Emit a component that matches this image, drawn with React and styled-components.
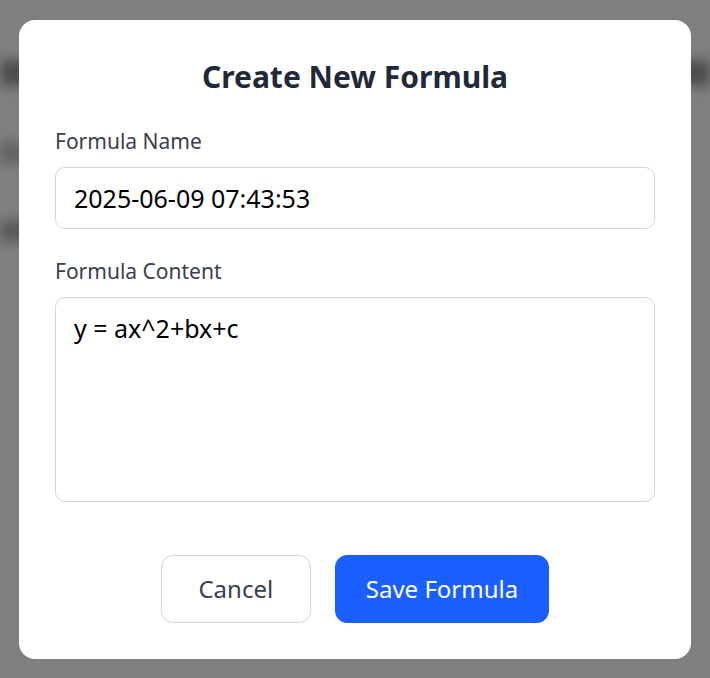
import React, { useState } from "react";
import styled, { createGlobalStyle } from "styled-components";

const GlobalStyle = createGlobalStyle`
  html, body {
    margin: 0;
    padding: 0;
    height: 100%;
    background: #ffffff;
    font-family: "Noto Sans", "Open Sans", sans-serif;
  }
  #root {
    height: 100%;
  }
  * {
    box-sizing: border-box;
  }
`;

const App = () => {
  const [name, setName] = useState("2025-06-09 07:43:53");
  const [content, setContent] = useState("y = ax^2+bx+c");

  return (
    <Page>
      <GlobalStyle />
      <Behind>
        <TopBar />
        <SideRow $width="120px" $shade="#c8c8c8" />
        <SideRow $width="160px" $shade="#b4b4b4" />
      </Behind>
      <Overlay>
        <Modal>
          <Title>Create New Formula</Title>
          <Field>
            <Label htmlFor="formula-name">Formula Name</Label>
            <Input
              id="formula-name"
              value={name}
              onChange={(e) => setName(e.target.value)}
            />
          </Field>
          <Field>
            <Label htmlFor="formula-content">Formula Content</Label>
            <TextArea
              id="formula-content"
              value={content}
              onChange={(e) => setContent(e.target.value)}
            />
          </Field>
          <Actions>
            <Button>Cancel</Button>
            <Button $primary>Save Formula</Button>
          </Actions>
        </Modal>
      </Overlay>
    </Page>
  );
};

export default App;

const Page = styled.div`
  position: relative;
  width: 100%;
  height: 100vh;
  overflow: hidden;
`;

const Behind = styled.div`
  display: flex;
  flex-direction: column;
  gap: 56px;
  padding-top: 60px;
  filter: blur(6px);
`;

const TopBar = styled.div`
  height: 26px;
  width: 100%;
  background: #9a9a9a;
`;

const SideRow = styled.div`
  height: 22px;
  width: ${(p) => p.$width};
  background: ${(p) => p.$shade};
`;

const Overlay = styled.div`
  position: absolute;
  inset: 0;
  background: rgba(0, 0, 0, 0.5);
  display: flex;
  justify-content: center;
  align-items: center;
`;

const Modal = styled.div`
  width: 672px;
  height: 639px;
  background: #ffffff;
  border-radius: 16px;
  padding: 36px;
  display: flex;
  flex-direction: column;
`;

const Title = styled.h2`
  margin: 0 0 29px;
  text-align: center;
  font-size: 30px;
  line-height: 42px;
  font-weight: 700;
  color: #1f2937;
`;

const Field = styled.div`
  display: flex;
  flex-direction: column;
  gap: 12px;
  margin-bottom: 28px;
`;

const Label = styled.label`
  font-size: 21px;
  line-height: 28px;
  color: #374151;
`;

const Input = styled.input`
  height: 62px;
  width: 100%;
  border: 1px solid #d1d5db;
  border-radius: 10px;
  padding: 0 18px;
  font-family: inherit;
  font-size: 25px;
  color: #000000;
  outline: none;
`;

const TextArea = styled.textarea`
  height: 205px;
  width: 100%;
  border: 1px solid #d1d5db;
  border-radius: 10px;
  padding: 14px 18px;
  font-family: inherit;
  font-size: 25px;
  line-height: 32px;
  color: #000000;
  resize: none;
  outline: none;
`;

const Actions = styled.div`
  margin-top: auto;
  display: flex;
  justify-content: center;
  gap: 24px;
`;

const Button = styled.button`
  height: 68px;
  padding: 0 ${(p) => (p.$primary ? "30px" : "36px")};
  min-width: 150px;
  border-radius: 12px;
  border: 1px solid ${(p) => (p.$primary ? "#1a5fff" : "#d1d5db")};
  background: ${(p) => (p.$primary ? "#1a5fff" : "#ffffff")};
  color: ${(p) => (p.$primary ? "#ffffff" : "#374151")};
  font-family: inherit;
  font-size: 24px;
  cursor: pointer;
`;
